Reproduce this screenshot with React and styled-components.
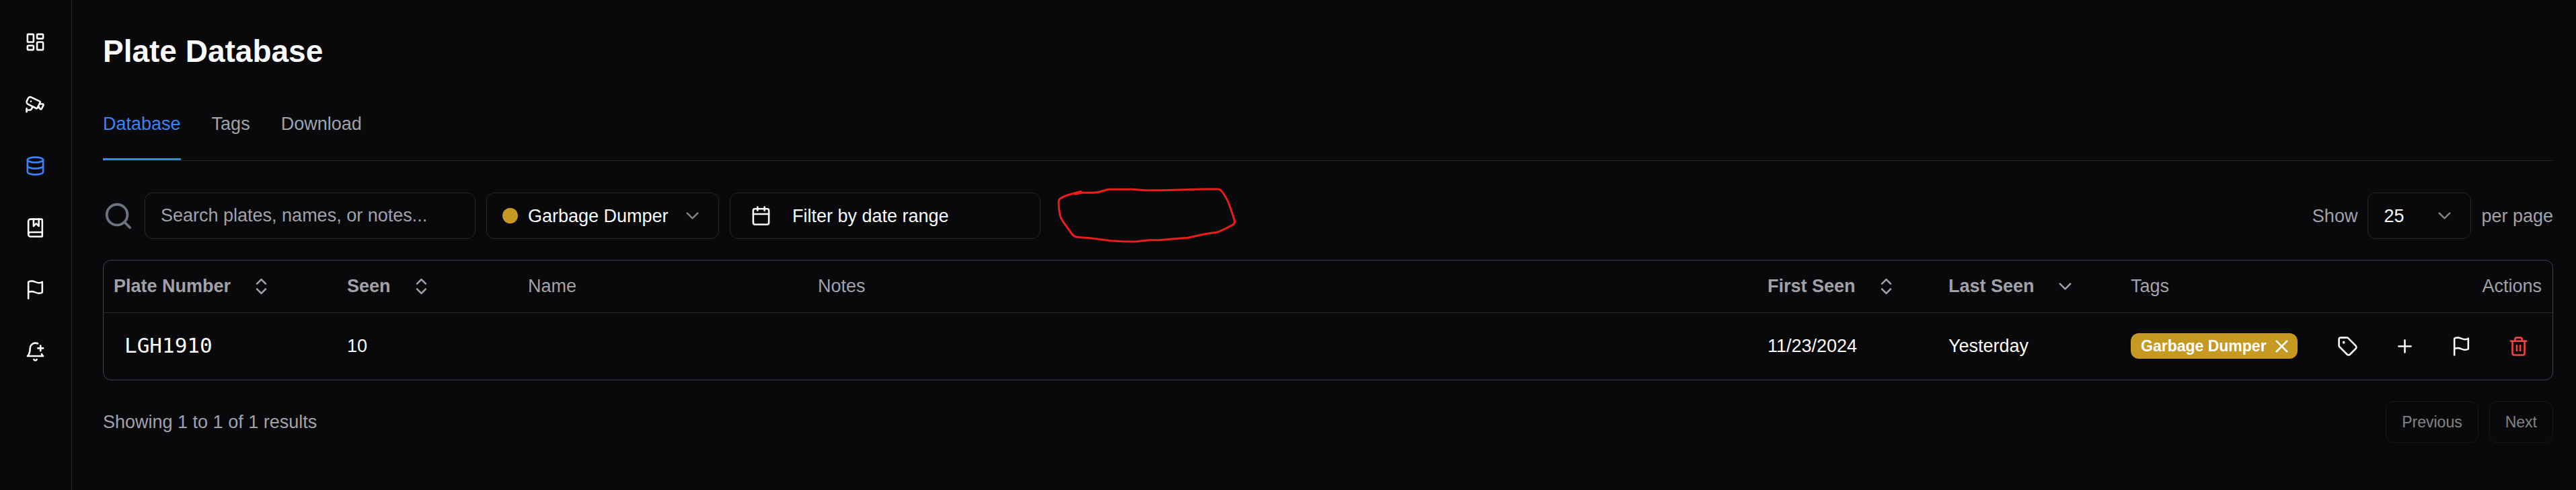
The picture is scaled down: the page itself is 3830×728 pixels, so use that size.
import React from 'react';
import styled, { createGlobalStyle, css } from 'styled-components';
import {
  BookMarked,
  Calendar,
  Cctv,
  ChevronDown,
  ChevronsUpDown,
  Database,
  LayoutDashboard,
  Plus,
  Search,
  Tag,
  Trash2,
  X,
} from 'lucide-react';

const color = {
  background: '#09090b',
  foreground: '#fafafa',
  muted: '#a1a1aa',
  tab: '#9ca3af',
  border: '#27272a',
  tableBorder: '#374151',
  blue: '#3b82f6',
  gold: '#c69a22',
  red: '#ef4444',
};

const GlobalStyle = createGlobalStyle`
  *, *::before, *::after {
    box-sizing: border-box;
  }

  body {
    margin: 0;
    background: ${color.background};
    color: ${color.foreground};
    font-family: 'Liberation Sans', Arial, sans-serif;
    font-size: 27px;
    line-height: 38px;
  }

  button, input, select {
    font: inherit;
    color: inherit;
  }

  svg {
    display: block;
    flex-shrink: 0;
  }
`;

const Layout = styled.div`
  display: flex;
  min-height: 100vh;
`;

const Sidebar = styled.nav`
  display: flex;
  flex-direction: column;
  flex-shrink: 0;
  align-items: center;
  gap: 15px;
  width: 107px;
  padding: 24px 1px 0 0;
  border-right: 1px solid ${color.border};
`;

const NavLink = styled.a`
  display: flex;
  align-items: center;
  justify-content: center;
  width: 77px;
  height: 77px;
  color: ${props => (props.$active ? color.blue : color.foreground)};
`;

const Main = styled.main`
  flex: 1;
  min-width: 0;
  padding: 46px 34px 46px 46px;
`;

const Title = styled.h1`
  margin: 0 0 46px;
  font-size: 46px;
  line-height: 61px;
`;

const Tabs = styled.div`
  display: flex;
  gap: 46px;
  margin-bottom: 47px;
  border-bottom: 1px solid ${color.border};
`;

const Tab = styled.a`
  padding: 12px 0 32px;
  border-bottom: 3px solid ${props => (props.$active ? color.blue : 'transparent')};
  color: ${props => (props.$active ? color.blue : color.tab)};
  text-decoration: none;
`;

const Toolbar = styled.div`
  display: flex;
  align-items: center;
  justify-content: space-between;
  margin-bottom: 31px;
`;

const Filters = styled.div`
  position: relative;
  display: flex;
  align-items: center;
  gap: 16px;
`;

const PageSize = styled.div`
  display: flex;
  align-items: center;
  gap: 15px;
  color: ${color.muted};
`;

const field = css`
  height: 69px;
  border: 1px solid ${color.border};
  border-radius: 12px;
  background: transparent;
`;

const SearchInput = styled.input`
  ${field}
  width: 492px;
  padding: 0 23px;

  &::placeholder {
    color: ${color.muted};
    opacity: 1;
  }
`;

const SelectBox = styled.div`
  ${field}
  display: flex;
  align-items: center;
  gap: 15px;
  width: ${props => props.$width};
  padding: 0 23px;
  color: ${color.foreground};

  svg {
    opacity: 0.5;
  }
`;

const Select = styled.select`
  flex: 1;
  min-width: 0;
  padding: 0;
  border: 0;
  background: transparent;
  appearance: none;
`;

const Dot = styled.span`
  width: 23px;
  height: 23px;
  border-radius: 50%;
  background: ${color.gold};
`;

const DateButton = styled.button`
  ${field}
  display: flex;
  align-items: center;
  gap: 31px;
  width: 462px;
  padding: 0 30px;
`;

const Scribble = styled.svg`
  position: absolute;
  top: -11px;
  left: 100%;
  margin-left: 23px;
  pointer-events: none;
`;

const TableFrame = styled.div`
  margin-bottom: 31px;
  border: 1px solid ${color.tableBorder};
  border-radius: 12px;
`;

const Table = styled.table`
  width: 100%;
  border-collapse: collapse;
  table-layout: fixed;
`;

const Th = styled.th`
  width: ${props => props.$width};
  height: 77px;
  padding: 0 16px 0 15px;
  border-bottom: 1px solid ${color.border};
  color: ${color.muted};
  font-weight: normal;
  text-align: ${props => props.$align || 'left'};
`;

const SortButton = styled.button`
  display: flex;
  align-items: center;
  gap: 30px;
  padding: 0;
  border: 0;
  background: transparent;
  font-weight: bold;
`;

const Td = styled.td`
  height: 100px;
  padding: 0 16px 0 15px;
`;

const Plate = styled.span`
  padding: 0 16px;
  font-family: 'DejaVu Sans Mono', monospace;
  font-size: 31px;
`;

const Badge = styled.div`
  display: flex;
  align-items: center;
  gap: 7px;
  width: fit-content;
  height: 38px;
  padding: 0 8px 0 15px;
  border-radius: 12px;
  background: ${color.gold};
  color: #fff;
  font-size: 23px;
  font-weight: bold;
  white-space: nowrap;
`;

const BadgeButton = styled.button`
  padding: 0;
  border: 0;
  background: transparent;
`;

const Actions = styled.div`
  display: flex;
  justify-content: flex-end;
  gap: 15px;
`;

const IconButton = styled.button`
  display: flex;
  align-items: center;
  justify-content: center;
  width: 70px;
  height: 69px;
  padding: 0;
  border: 0;
  background: transparent;
  color: ${props => (props.$danger ? color.red : color.foreground)};
`;

const Footer = styled.div`
  display: flex;
  align-items: center;
  justify-content: space-between;
  color: ${color.muted};
`;

const Pager = styled.div`
  display: flex;
  gap: 16px;
`;

const PageButton = styled.button`
  height: 62px;
  padding: 0 23px;
  border: 1px solid ${color.border};
  border-radius: 12px;
  background: transparent;
  color: ${color.foreground};
  font-size: 23px;
  opacity: 0.5;
`;

const Icon = ({ children }) => (
  <svg
    width="31"
    height="31"
    viewBox="0 0 24 24"
    fill="none"
    stroke="currentColor"
    strokeWidth="2"
    strokeLinecap="round"
    strokeLinejoin="round"
  >
    {children}
  </svg>
);

const Flag = () => (
  <Icon>
    <path d="M4 15s1-1 4-1 5 2 8 2 4-1 4-1V3s-1 1-4 1-5-2-8-2-4 1-4 1z" />
    <path d="M4 22v-7" />
  </Icon>
);

const BellPlus = () => (
  <Icon>
    <path d="M19.3 14.8C20.1 16.4 21 17 21 17H3s3-2 3-9c0-3.3 2.7-6 6-6 1 0 1.9.2 2.8.7" />
    <path d="M10.3 21a1.94 1.94 0 0 0 3.4 0" />
    <path d="M15 8h6" />
    <path d="M18 5v6" />
  </Icon>
);

const nav = [
  { label: 'Dashboard', icon: LayoutDashboard },
  { label: 'Live feed', icon: Cctv },
  { label: 'Database', icon: Database, active: true },
  { label: 'Known plates', icon: BookMarked },
  { label: 'Flagged', icon: Flag },
  { label: 'Notifications', icon: BellPlus },
];

const columns = [
  { label: 'Plate Number', width: '347px', sort: ChevronsUpDown },
  { label: 'Seen', width: '269px', sort: ChevronsUpDown },
  { label: 'Name', width: '431px' },
  { label: 'Notes' },
  { label: 'First Seen', width: '269px', sort: ChevronsUpDown },
  { label: 'Last Seen', width: '271px', sort: ChevronDown },
  { label: 'Tags', width: '288px' },
  { label: 'Actions', width: '354px', align: 'right' },
];

const rows = [
  { plate: 'LGH1910', seen: 10, first: '11/23/2024', last: 'Yesterday', tag: 'Garbage Dumper' },
];

const App = () => (
  <Layout>
    <GlobalStyle />
    <Sidebar>
      {nav.map(({ label, icon: NavIcon, active }) => (
        <NavLink key={label} href="#" aria-label={label} $active={active}>
          <NavIcon size={31} />
        </NavLink>
      ))}
    </Sidebar>
    <Main>
      <Title>Plate Database</Title>
      <Tabs>
        <Tab href="#" $active>Database</Tab>
        <Tab href="#">Tags</Tab>
        <Tab href="#">Download</Tab>
      </Tabs>
      <Toolbar>
        <Filters>
          <Search size={46} color="#6b7280" />
          <SearchInput
            type="search"
            aria-label="Search plates"
            placeholder="Search plates, names, or notes..."
          />
          <SelectBox $width="346px">
            <Dot />
            <Select aria-label="Tag" defaultValue="garbage">
              <option value="garbage">Garbage Dumper</option>
            </Select>
            <ChevronDown size={31} />
          </SelectBox>
          <DateButton type="button">
            <Calendar size={31} />
            Filter by date range
          </DateButton>
          <Scribble width="270" height="90" viewBox="0 0 270 90" fill="none">
            <path
              d="M37 9.500L22 13.500Q10 17 6.500 20Q4 21 4 26Q4 36 6 44Q7 50 11 55L24 73Q27 77 34 77.500L51 78.700Q66 80.500 82 82.700Q100 84 118 84L138 81.700H154L176 79.700L196 78.300L221 72.700L241 69.700Q252 65 263 59Q266 57 265.500 53Q263 44 259 33Q256 23 250 14Q245 6 241 6H221L159 7.700H132L114 6.300H80Q76 6.500 72 8Q63 11 56 11.300H38L28 13.500"
              stroke="#ed1c1c"
              strokeWidth="3"
              strokeLinecap="round"
              strokeLinejoin="round"
            />
          </Scribble>
        </Filters>
        <PageSize>
          <label htmlFor="page-size">Show</label>
          <SelectBox $width="154px">
            <Select id="page-size" defaultValue="25">
              <option value="25">25</option>
            </Select>
            <ChevronDown size={31} />
          </SelectBox>
          <span>per page</span>
        </PageSize>
      </Toolbar>
      <TableFrame>
        <Table>
          <thead>
            <tr>
              {columns.map(({ label, width, align, sort: SortIcon }) => (
                <Th key={label} $width={width} $align={align}>
                  {SortIcon ? (
                    <SortButton type="button">
                      {label}
                      <SortIcon size={31} />
                    </SortButton>
                  ) : (
                    label
                  )}
                </Th>
              ))}
            </tr>
          </thead>
          <tbody>
            {rows.map(row => (
              <tr key={row.plate}>
                <Td><Plate>{row.plate}</Plate></Td>
                <Td>{row.seen}</Td>
                <Td />
                <Td />
                <Td>{row.first}</Td>
                <Td>{row.last}</Td>
                <Td>
                  <Badge>
                    {row.tag}
                    <BadgeButton type="button" aria-label="Remove tag"><X size={31} /></BadgeButton>
                  </Badge>
                </Td>
                <Td>
                  <Actions>
                    <IconButton type="button" aria-label="Tag plate"><Tag size={31} /></IconButton>
                    <IconButton type="button" aria-label="Add plate"><Plus size={31} /></IconButton>
                    <IconButton type="button" aria-label="Flag plate"><Flag /></IconButton>
                    <IconButton type="button" aria-label="Delete plate" $danger><Trash2 size={31} /></IconButton>
                  </Actions>
                </Td>
              </tr>
            ))}
          </tbody>
        </Table>
      </TableFrame>
      <Footer>
        <span>Showing 1 to 1 of 1 results</span>
        <Pager>
          <PageButton type="button" disabled>Previous</PageButton>
          <PageButton type="button" disabled>Next</PageButton>
        </Pager>
      </Footer>
    </Main>
  </Layout>
);

export default App;
